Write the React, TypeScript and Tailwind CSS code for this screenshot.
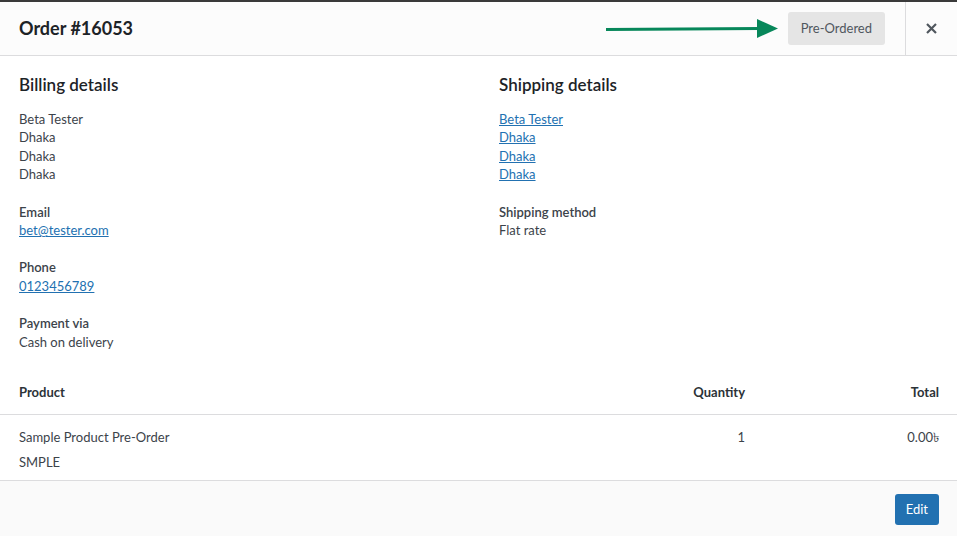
const FONT = "font-['Lato','Liberation_Sans',sans-serif]";

function Field({ label, children }: { label: string; children: React.ReactNode }) {
  return (
    <div className="mt-[19px]">
      <p className="font-semibold text-[#3c434a]">{label}</p>
      <div>{children}</div>
    </div>
  );
}

export default function App() {
  const billing = ["Beta Tester", "Dhaka", "Dhaka", "Dhaka"];
  const shipping = ["Beta Tester", "Dhaka", "Dhaka", "Dhaka"];

  return (
    <div className={`${FONT} flex h-[536px] w-[957px] flex-col overflow-hidden bg-white text-[13px] leading-[18.4px] text-[#3c434a]`}>
      <div className="h-[2px] bg-[#3a3a3a]" />

      <header className="flex h-[54px] items-center border-b border-[#dcdcde] bg-[#fcfcfc]">
        <h1 className="flex-1 pl-[19px] text-[18px] font-bold text-[#1d2327]">Order #16053</h1>
        <svg width="172" height="22" viewBox="0 0 172 22" className="mr-[10px]">
          <line x1="0" y1="11.5" x2="154" y2="10.5" stroke="#07875a" strokeWidth="3" />
          <polygon points="151,1 172,10.5 151,20" fill="#07875a" />
        </svg>
        <span className="mr-[20px] flex h-[33px] items-center rounded-[3px] bg-[#e5e5e5] px-[13px] text-[13px] text-[#50575e]">
          Pre-Ordered
        </span>
        <button className="flex h-full w-[52px] items-center justify-center border-l border-[#dcdcde] text-[#50575e]">
          <svg width="11" height="11" viewBox="0 0 11 11">
            <path d="M1 1 L10 10 M10 1 L1 10" stroke="#50575e" strokeWidth="2.2" />
          </svg>
        </button>
      </header>

      <main className="flex-1 overflow-hidden">
        <div className="flex pl-[19px] pt-[18px]">
          <section className="w-[480px]">
            <h2 className="text-[17px] leading-[22px] font-semibold text-[#1d2327]">Billing details</h2>
            <div className="mt-[14px]">
              {billing.map((l, i) => (
                <p key={i}>{l}</p>
              ))}
            </div>
            <Field label="Email">
              <a href="#" className="text-[#2271b1] underline">bet@tester.com</a>
            </Field>
            <Field label="Phone">
              <a href="#" className="text-[#2271b1] underline">0123456789</a>
            </Field>
            <Field label="Payment via">
              <p>Cash on delivery</p>
            </Field>
          </section>
          <section className="flex-1">
            <h2 className="text-[17px] leading-[22px] font-semibold text-[#1d2327]">Shipping details</h2>
            <div className="mt-[14px]">
              {shipping.map((l, i) => (
                <p key={i}>
                  <a href="#" className="text-[#2271b1] underline">{l}</a>
                </p>
              ))}
            </div>
            <Field label="Shipping method">
              <p>Flat rate</p>
            </Field>
          </section>
        </div>

        <div className="mt-[19px]">
          <div className="flex h-[45px] items-center border-b border-[#dcdcde] pl-[19px] pr-[18px] font-bold text-[#2c3338]">
            <span className="flex-1">Product</span>
            <span className="w-[120px] text-right">Quantity</span>
            <span className="w-[194px] text-right">Total</span>
          </div>
          <div className="flex pl-[19px] pr-[18px] pt-[13px]">
            <div className="flex-1">
              <p>Sample Product Pre-Order</p>
              <p className="mt-[7px]">SMPLE</p>
            </div>
            <span className="w-[120px] text-right">1</span>
            <span className="w-[194px] text-right">0.00৳</span>
          </div>
        </div>
      </main>

      <footer className="flex h-[56px] items-start justify-end border-t border-[#dcdcde] bg-[#fafafa] pr-[18px] pt-[13px]">
        <button className="h-[31px] rounded-[3px] bg-[#2271b1] px-[11px] text-[13px] text-white">Edit</button>
      </footer>
    </div>
  );
}
